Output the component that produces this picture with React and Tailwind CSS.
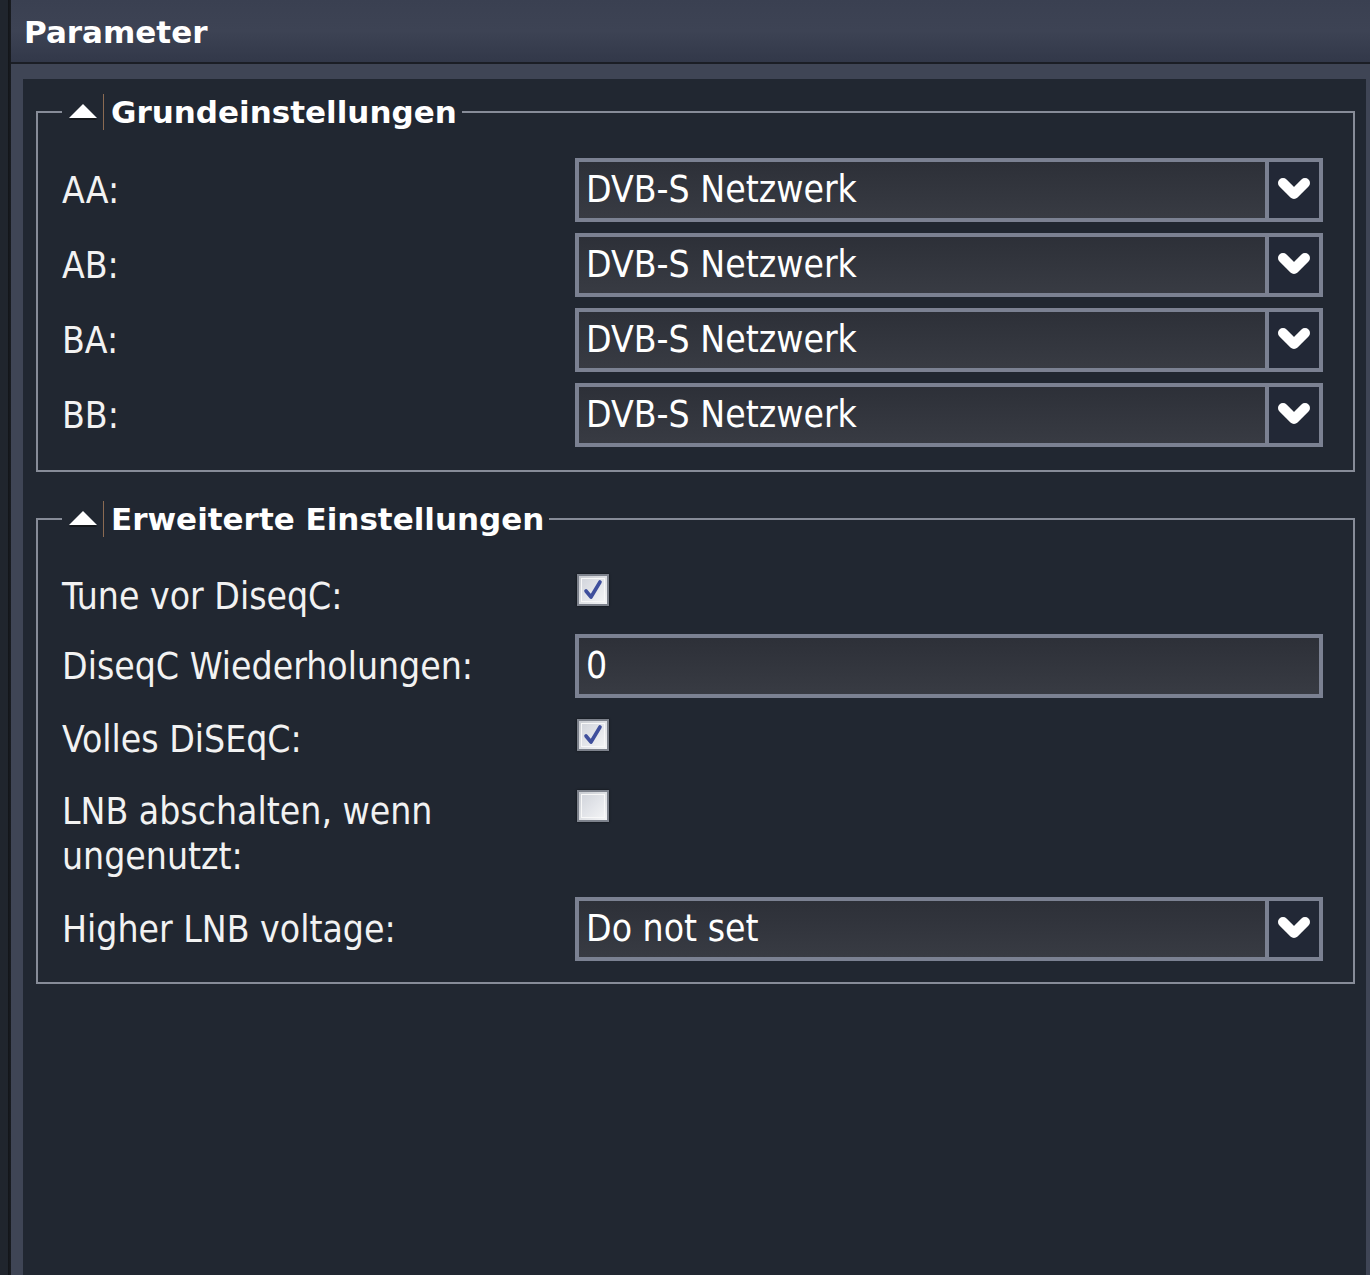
import React from "react";

const LABEL = "text-[37px] leading-[45px] text-[#f2f2f2] [font-family:'DejaVu_Sans_Condensed','DejaVu_Sans',sans-serif]";

function Chevron() {
  return (
    <svg width="36" height="28" viewBox="0 0 36 28">
      <polyline points="7,7 18,18 29,7" fill="none" stroke="#ffffff" strokeWidth="10" strokeLinejoin="round" strokeLinecap="round" />
    </svg>
  );
}

function Select({ value }) {
  return (
    <div className="flex h-[64px] w-[748px] border-[4px] border-[#7b8192] bg-gradient-to-b from-[#2d3038] to-[#383b43]">
      <div className="flex flex-1 items-center pl-[7px] text-[37px] text-white [font-family:'DejaVu_Sans_Condensed','DejaVu_Sans',sans-serif]">
        {value}
      </div>
      <div className="flex w-[54px] items-center justify-center border-l-[4px] border-[#7b8192] bg-[#222836]">
        <Chevron />
      </div>
    </div>
  );
}

function TextInput({ value }) {
  return (
    <div className="flex h-[64px] w-[748px] items-center border-[4px] border-[#7b8192] bg-gradient-to-b from-[#2d3038] to-[#383b43] pl-[7px] text-[37px] text-white [font-family:'DejaVu_Sans_Condensed','DejaVu_Sans',sans-serif]">
      {value}
    </div>
  );
}

function Checkbox({ checked }) {
  return (
    <div className="flex h-[32px] w-[32px] items-center justify-center border-[2px] border-[#7d828c] bg-gradient-to-br from-[#c9ccd2] to-[#f4f5f7] shadow-[0_0_2px_rgba(0,0,0,0.6)]">
      <div className="flex h-[24px] w-[24px] items-center justify-center border border-[#f8f8f8] bg-gradient-to-br from-[#d3d6dd] to-[#f2f3f5]">
        {checked && (
          <svg width="22" height="22" viewBox="0 0 22 22">
            <path d="M4 12 L9 18 L18 3" fill="none" stroke="#3f4f9c" strokeWidth="3.6" strokeLinejoin="round" strokeLinecap="round" />
          </svg>
        )}
      </div>
    </div>
  );
}

function Legend({ children }) {
  return (
    <legend className="flex h-[40px] items-center pl-[5px] pr-[5px]">
      <svg width="32" height="18" viewBox="0 0 32 18" className="mr-[4px]">
        <polygon points="2,17 16,3 30,17" fill="#15181c" />
        <polygon points="2,15 16,1 30,15" fill="#ffffff" />
      </svg>
      <span className="mr-[7px] h-[36px] w-[1px] bg-[#8a6a52]" />
      <span className="text-[31px] font-bold leading-[40px] text-white [font-family:'DejaVu_Sans',sans-serif]">{children}</span>
    </legend>
  );
}

function SelectRow({ label, value }) {
  return (
    <div className="grid grid-cols-[513px_1fr] items-center">
      <div className={LABEL}>{label}</div>
      <Select value={value} />
    </div>
  );
}

export default function App() {
  return (
    <div className="flex h-[1275px] w-[1370px] overflow-hidden bg-[#1e222a]">
      <div className="w-[8px] bg-[#20252d]" />
      <div className="w-[3px] bg-gradient-to-r from-[#121418] to-[#1a1d22]" />
      <div className="flex flex-1 flex-col">
        <div className="flex h-[62px] items-center bg-gradient-to-b from-[#3a4051] via-[#3d4354] to-[#323849] pl-[13px] pt-[2px]">
          <span className="text-[31px] font-bold text-white [font-family:'DejaVu_Sans',sans-serif]">Parameter</span>
        </div>
        <div className="h-[2px] bg-[#1b1e25]" />
        <div className="flex flex-1 flex-col bg-[#3f4555] pl-[12px] pr-[4px] pt-[15px]">
          <div className="flex flex-1 flex-col bg-[#212731] pl-[13px] pr-[11px] pt-[13px]">
            <fieldset className="border-[2px] border-[#878c98] pb-[23px] pl-[24px] pr-[0px] pt-[26px]">
              <Legend>Grundeinstellungen</Legend>
              <div className="flex flex-col gap-[11px]">
                <SelectRow label="AA:" value="DVB-S Netzwerk" />
                <SelectRow label="AB:" value="DVB-S Netzwerk" />
                <SelectRow label="BA:" value="DVB-S Netzwerk" />
                <SelectRow label="BB:" value="DVB-S Netzwerk" />
              </div>
            </fieldset>
            <fieldset className="mt-[27px] border-[2px] border-[#878c98] pb-[21px] pl-[24px] pr-[0px] pt-[35px]">
              <Legend>Erweiterte Einstellungen</Legend>
              <div className="flex flex-col">
                <div className="grid grid-cols-[513px_1fr] items-start">
                  <div className={LABEL}>Tune vor DiseqC:</div>
                  <div className="pl-[2px]"><Checkbox checked /></div>
                </div>
                <div className="mt-[15px] grid grid-cols-[513px_1fr] items-center">
                  <div className={LABEL}>DiseqC Wiederholungen:</div>
                  <TextInput value="0" />
                </div>
                <div className="mt-[19px] grid grid-cols-[513px_1fr] items-start">
                  <div className={LABEL}>Volles DiSEqC:</div>
                  <div className="pl-[2px] pt-[2px]"><Checkbox checked /></div>
                </div>
                <div className="mt-[27px] grid grid-cols-[513px_1fr] items-start">
                  <div className={LABEL}>LNB abschalten, wenn<br />ungenutzt:</div>
                  <div className="pl-[2px] pt-[1px]"><Checkbox /></div>
                </div>
                <div className="mt-[18px] grid grid-cols-[513px_1fr] items-center">
                  <div className={LABEL}>Higher LNB voltage:</div>
                  <Select value="Do not set" />
                </div>
              </div>
            </fieldset>
          </div>
        </div>
      </div>
    </div>
  );
}
